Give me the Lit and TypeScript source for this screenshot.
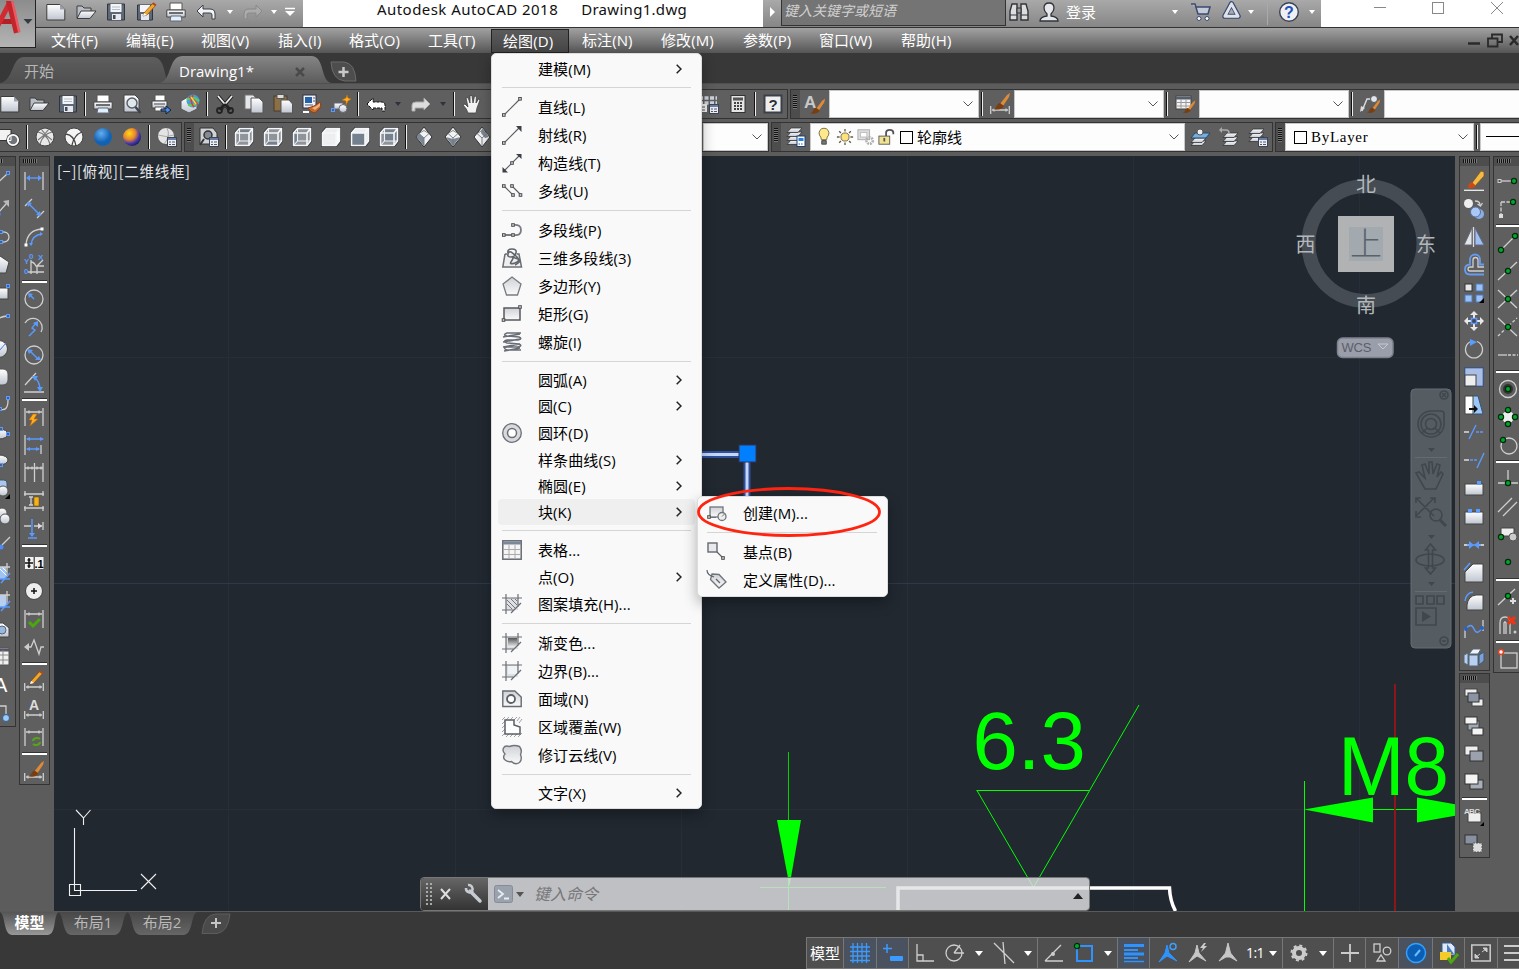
import { LitElement, html, svg, css } from "lit";
import { customElement } from "lit/decorators.js";

const dimBase = svg`<path class="l" d="M1 1v18M19 1v18M2 5h16M5 3.500v3M15 3.500v3"/>`;
const dimLow = svg`<path class="l" d="M.7 12v8M19.3 12v8M2 16h16M4 14.500v3M16 14.500v3"/>`;
const brush = svg`<path d="M9 13l7-9 3-2-1 4-6 9z" fill="#e08a35"/><path d="M2 18c4 0 3-5 7-6l4 3c-2 4-7 4-11 3z" fill="#7a3d10"/>`;
const pencil = svg`<path d="M6 11L15 1l3 2-9 10-4 1z" fill="#f2a72c" stroke="#6b3a10" stroke-width=".6"/><path d="M5 14l1-3 3 2z" fill="#fff"/><path d="M14 2l1.500-1.500 3 2L17 4z" fill="#b5461c"/>`;
const gdot = (x: number, y: number) => svg`<circle cx=${x} cy=${y} r="2.600" fill="#00a52c" stroke="#06280d" stroke-width="1.200"/>`;
const bsq = (x: number, y: number) => svg`<rect x=${x - 1.5} y=${y - 1.5} width="3" height="3" fill="#4c5f80" stroke="#5b9bff"/>`;
const msq = (x: number, y: number) => svg`<rect x=${x - 1.3} y=${y - 1.3} width="2.600" height="2.600" fill="#ddd" stroke="#4b4d52"/>`;
const panelMini = svg`<rect x="10.500" y="10.500" width="9" height="9" fill="#e9eef7" stroke="#3d4552"/><path d="M11 12h8" stroke="#667ea4" stroke-width="2"/><path d="M12 15h2m1 0h3M12 17.500h2m1 0h3" stroke="#556"/>`;
const sheet = (x: number, y: number, f = "url(#w)") => svg`<path d="M${x + 4} ${y}h11l-4 4.500h-11z" fill=${f} stroke="#333" stroke-width=".8"/>`;
const FACES = ["M5.500 1.500h13L15 6H1.500z", "M5.500 14h13L15 18.500H1.500z", "M1.500 6l4-4.500V14l-4 4.500z", "M15 6l3.500-4.500V14L15 18.500z", "M1.500 6H15v12.500H1.500z", "M5.500 1.500h13V14h-13z"];
const cube = (f: number) => svg`<path d="M5.500 1.500h13V14L15 18.500H1.500V6z" fill="#858a91" stroke="#2f3338" stroke-width="3"/>
  <path d="M5.500 1.500h13V14L15 18.500H1.500V6z" fill=${f === 4 || f === 3 ? "#eceef0" : "#8f949b"}/>
  <path d=${FACES[f]} fill=${f === 3 ? "#fff" : "#74808e"}/>
  <path d="M5.500 1.500h13V14L15 18.500H1.500V6zM1.500 6H15v12.500M15 6l3.500-4.500" fill="none" stroke="#f6f7f8" stroke-width="1.600"/>
  ${f === 4 ? "" : svg`<path d="M5.500 2v12H18M5.500 14l-4 4.500" fill="none" stroke="#f0f1f3" stroke-width="1.100"/>`}`;
const dia = (f: number) => svg`<path d="M10 0l8 10-8 10-8-10z" fill="#f0f2f5" stroke="#333"/><path d=${["M2.500 10L10 19v-8L5 6.500z", "M10 12l7-2-7 9-7-9z", "M10 1l7 9-4 1-4-5z", "M10 1l-8 9 4 3 4-5z"][f]} fill="#7b8694"/><path d="M5 6.500l5 4.500 5-4.500M10 11v8M5 6.500l5-3 5 3" fill="none" stroke="#777" stroke-width=".9"/>`;
const hatchFrame = (f: any) => svg`<rect x="4" y="4" width="12" height="12" fill="#dcdfe3"/>${f}<path d="M4 0v20M16 0v13M0 4h20M0 16h12M19 9L9 19" fill="none" stroke="#6a6e75" stroke-width="1.200"/>`;

const I: Record<string, any> = {
  new: svg`<path d="M.8 2.500h13l5 5V18H.8z" fill="url(#w)" stroke="#3c3c3c"/><path d="M14 2.500l5 5h-5z" fill="#9ba2ad"/>`,
  open: svg`<path d="M1 16V4h5l2 2h7v3" fill="#b8bec8" stroke="#3c3c3c"/><path d="M1 16.500L5 9h15l-6 7.500z" fill="url(#w)" stroke="#3c3c3c"/>`,
  save: svg`<path d="M1.500 2h17v16h-17z" fill="#5f6875" stroke="#2f3540"/><rect x="4.500" y="2" width="11" height="8" fill="#f3f5f8"/><path d="M6 5h8M6 7.500h8" stroke="#b7bdc8"/><rect x="6" y="12" width="9" height="6" fill="#e5e8ee"/><rect x="7" y="13" width="2.500" height="4" fill="#444c58"/>`,
  saveas: svg`<path d="M1.500 3h15v15h-15z" fill="#5f6875" stroke="#2f3540"/><rect x="4" y="3" width="10" height="7" fill="#f3f5f8"/><rect x="5" y="12" width="8" height="6" fill="#e5e8ee"/><g transform="translate(2)">${pencil}</g>`,
  print: svg`<path d="M4 1h12v7H4z" fill="#fff" stroke="#555"/><path d="M.8 8h18.400v7H.8z" fill="url(#w)" stroke="#444"/><path d="M3 11h14" stroke="#444" stroke-width="1.500"/><path d="M5 14h10l1 5H4z" fill="#dff1fc" stroke="#667"/>`,
  preview: svg`<path d="M2 1h11l4 4v13H2z" fill="url(#w)" stroke="#444"/><circle cx="10" cy="9" r="5" fill="#dfe7ec" stroke="#555c66" stroke-width="1.400"/><path d="M13.500 13l5 6" stroke="#3c434d" stroke-width="2.500"/>`,
  publish: svg`<path d="M4 1h10v6H4z" fill="#fff" stroke="#555"/><path d="M1 7h15v7H1z" fill="url(#w)" stroke="#444"/><path d="M3 10h11" stroke="#444"/><path d="M4 13h9v4H4z" fill="#fff" stroke="#555"/><path d="M10 15h5v-3l5 4-5 4v-3h-5z" fill="#4c86e8" stroke="#123"/>`,
  dwf: svg`<path d="M1 7l7-4 9 3v9l-8 4-8-4z" fill="url(#w)" stroke="#555"/><circle cx="13" cy="7" r="6.500" fill="#3f9fe0"/><path d="M7 6q6-5 12 1M8 11q6 1 10-2" fill="none" stroke="#5fd04a" stroke-width="2"/><path d="M13 1q-4 6 1 12M9 3q5 2 9 8" fill="none" stroke="#e33b2a" stroke-width="1.500"/><path d="M11 3l5 7" stroke="#ffd23c" stroke-width="1.500"/>`,
  cut: svg`<path d="M3 2l11 13M17 2L6 15" stroke="#222" stroke-width="3.500"/><path d="M3 2l11 13M17 2L6 15" stroke="#eee" stroke-width="1.800"/><path d="M10 10l5 6M10 10l-5 6" stroke="#222" stroke-width="2.500"/><circle cx="4.500" cy="16.500" r="2.500" fill="none" stroke="#222" stroke-width="1.800"/><circle cx="15.500" cy="16.500" r="2.500" fill="none" stroke="#222" stroke-width="1.800"/>`,
  copy: svg`<path d="M1 1h8l3 3v11H1z" fill="#e5e7ea" stroke="#777"/><path d="M7 4h8l4 4v11H7z" fill="url(#w)" stroke="#555"/>`,
  paste: svg`<rect x="1" y="2" width="13" height="15" fill="#8b6f47" stroke="#4b3c26"/><rect x="4" y=".5" width="7" height="4" fill="#ddd" stroke="#555"/><path d="M8 6h8l3.500 4v9H8z" fill="url(#w)" stroke="#555"/>`,
  match: svg`<rect x="1" y="1" width="13" height="13" fill="#eef3fa" stroke="#334"/><rect x="3" y="3" width="7" height="6" fill="#2562a8"/><path d="M11 4h2m-2 3h2M3 11h8" stroke="#557"/><path d="M6 14q6-1 12-6l1 5-6 6q-4 0-7-5z" fill="#c8682a" stroke="#8a4218"/><path d="M10 14q4-1 8-5l0 3-5 4z" fill="#f0b080"/><path d="M1 17h6v2H1z" fill="#fff"/>`,
  block: svg`<rect x="3" y="9" width="9" height="6" fill="url(#w)" stroke="#667"/><circle cx="12" cy="14.500" r="4" fill="url(#w)" stroke="#667"/>${bsq(2, 16)}<path d="M16 1l1 3 3 1-3 2-2 4v-4l-4-1 4-2z" fill="#ffb41c" stroke="#c86b08" stroke-width=".7"/>`,
  undo: svg`<path d="M1 9l6-6v4h7q5 0 5 5v5h-3v-4q0-2-2-2H7v4z" fill="#f0f2f5" stroke="#3a3e45"/>`,
  redoOff: svg`<path d="M19 9l-6-6v4H6q-5 0-5 5v5h3v-4q0-2 2-2h7v4z" fill="#ababab" stroke="#888"/>`,
  undo2: svg`<path d="M1 10l6-6v4h8q4 0 4 3v6h-3v-3H7v2z" fill="#fff" stroke="#111" stroke-dasharray="3 1"/>`,
  redo2: svg`<path d="M19 10l-6-6v4H5q-4 0-4 3v6h3v-3h9v2z" fill="#ddd" stroke="#aaa"/>`,
  hand: svg`<path d="M6 19q-1-4-5-8l2-1 3 3L4 4l2-.5L8 9V1.500h2L11 9l1.500-7 2 .5L14 9l2.500-4 1.500 1-3 8-1 5z" fill="#f2f2f2" stroke="#3f3f3f" stroke-width=".8"/>`,
  tools: svg`<path d="M0 4h18M0 9h18" fill="none" stroke="#cdd3dc" stroke-width="3.500" stroke-dasharray="4 1.500"/><path d="M1 10h7v8H1z" fill="#eee"/><path d="M2 13h4M2 16h4" stroke="#555"/>${panelMini}`,
  calc: svg`<rect x="3" y="1.500" width="14" height="17" fill="#e5e5e5" stroke="#333"/><rect x="5" y="3.500" width="10" height="3" fill="#555"/><path d="M6 9h8M6 12h8M6 15h8" stroke="#444" stroke-width="2" stroke-dasharray="2 1"/>`,
  help: svg`<rect x="1.500" y="1.500" width="17" height="17" fill="#eee" stroke="#3b4048" stroke-width="2"/><text x="10" y="16" text-anchor="middle" font-size="15" font-weight="700" fill="#2c3038">?</text>`,
  abrush: svg`<text x="-1" y="14" font-size="17" font-weight="700" fill="#c9c9c9">A</text><g transform="translate(3 3) scale(.9)">${brush}</g>`,
  dimbrush: svg`${dimLow}<g transform="translate(1 -3)">${brush}</g>`,
  tablebrush: svg`<rect x="1" y="2" width="15" height="13" fill="#f2f2f2" stroke="#444"/><path d="M1 4h15" stroke="#555e6b" stroke-width="3"/><path d="M1 8.500h15M1 12h15M6 5v10M11 5v10" stroke="#999"/><g transform="translate(6 5) scale(.75)">${brush}</g>`,
  leaderbrush: svg`<path d="M2 17L7 5h5" fill="none" stroke="#ddd" stroke-width="1.400"/><path d="M0 18l1-6 4 2z" fill="#ddd"/><circle cx="14" cy="5" r="3.500" fill="#dfe6ee" stroke="#555"/><g transform="translate(5 4) scale(.8)">${brush}</g>`,
  wire2: svg`<rect x="-1" y="2.500" width="12" height="11" fill="#f2f2f2" stroke="#333"/><circle cx="13" cy="13" r="6.800" fill="#333"/><circle cx="13" cy="13" r="5.200" fill="#70757c" stroke="#fff" stroke-width="1.800"/><path d="M7 13.500h4V8" stroke="#fff" fill="none"/>`,
  sph1: svg`<circle cx="10" cy="10" r="9" fill="#e8e8e8" stroke="#444"/><path d="M3 5q9 2 12 12M17 5Q8 7 5 17M6 2q5 7 11 11M14 2Q9 9 3 13" fill="none" stroke="#777" stroke-width="1.200"/>`,
  sph2: svg`<circle cx="10" cy="10" r="9" fill="#f4f4f4" stroke="#444"/><path d="M2 7q8 1 10 12M18 5Q10 8 8 18" fill="none" stroke="#444" stroke-width="1.300"/>`,
  sph3: svg`<circle cx="10" cy="10" r="9" fill="url(#blueball)"/>`,
  sph4: svg`<circle cx="10" cy="10" r="9" fill="url(#goldball)"/>`,
  sphPanel: svg`<circle cx="9" cy="9" r="8.500" fill="#e4e4e4" stroke="#555"/><path d="M10 1q4 8-3 16M1 8q8 3 16 0" fill="none" stroke="#aaa"/>${panelMini}`,
  viewPanel: svg`<path d="M1 1h13l4 5v11H1z" fill="#cfd3d8" stroke="#333"/><circle cx="9" cy="8" r="4" fill="#848b94" stroke="#333" stroke-width="1.500"/><path d="M5 12l-4 6" stroke="#333" stroke-width="2"/>${panelMini}`,
  c0: cube(0), c1: cube(1), c2: cube(2), c3: cube(3), c4: cube(4), c5: cube(5),
  d0: dia(0), d1: dia(1), d2: dia(2), d3: dia(3),
  layers: svg`${sheet(1, 13)}${sheet(1, 9)}${sheet(1, 5)}${sheet(1, 1)}<rect x="11" y="9" width="8" height="10.500" fill="#fff" stroke="#1a4078"/><rect x="12.500" y="11" width="5" height="3" fill="#2b7fe0"/><path d="M12.500 17h5" stroke="#2b5aa0" stroke-dasharray="1.500 1"/>`,
  lay1: svg`${sheet(1, 14)}${sheet(1, 11)}<path d="M5 6h15l-4 5H1z" fill="#78aede" stroke="#27486b"/><circle cx="10" cy="5" r="3" fill="#eee" stroke="#555"/>`,
  lay2: svg`${sheet(4, 14)}${sheet(4, 10)}${sheet(4, 6)}<path d="M1 3h6q3 0 3 3" fill="none" stroke="#aaa" stroke-width="1.500"/><path d="M3 0v6L0 3z" fill="#aaa"/>`,
  lay3: svg`${sheet(1, 10)}${sheet(1, 6)}${sheet(1, 2)}${panelMini}`,
  bulb: svg`<path d="M7 13q0-3-2-5a5.500 5.500 0 1 1 10 0q-2 2-2 5z" fill="#ffe98a" stroke="#6d6540"/><path d="M7.500 14h5v4h-5z" fill="#777" stroke="#444"/>`,
  sun: svg`<circle cx="10" cy="10" r="4.500" fill="#ffe27a" stroke="#665"/><path d="M10 1v3m0 12v3M1 10h3m12 0h3M3.500 3.500l2 2m9 9l2 2m0-13l-2 2m-9 9l-2 2" stroke="#665c40" stroke-width="1.500"/>`,
  vpfrz: svg`<rect x="1" y="2" width="13" height="11" fill="#ddd" stroke="#aaa"/><rect x="4" y="5" width="7" height="5" fill="#fff" stroke="#bbb"/><circle cx="14" cy="14" r="3.500" fill="none" stroke="#b0b0b0" stroke-width="3" stroke-dasharray="2 1"/>`,
  lock: svg`<path d="M9 9V5q0-3 4-3t4 3v2" fill="none" stroke="#555" stroke-width="2"/><rect x="1" y="9" width="12" height="9" fill="#f2e391" stroke="#555"/><path d="M7 11v4" stroke="#555" stroke-width="2"/>`,
  // drawing tools
  tline: svg`<path class="l" d="M1 18L17 3"/>${bsq(18, 2)}`,
  tray: svg`<path class="l" d="M8 14l8-9"/><path d="M19 1v7l-6-6z" fill="#bbb"/><circle cx="9" cy="15" r="2" fill="#3f7ff0"/>`,
  tpline: svg`<path class="l" d="M10 5q9-1 9 5t-9 5" stroke-width="2"/>${bsq(11, 5)}${bsq(11, 15)}`,
  tpoly: svg`<path d="M10 1l9 6-3 11H4L1 7z" fill="url(#w)" stroke="#444"/>`,
  trect: svg`<rect x="1" y="5" width="17" height="11" fill="url(#w)" stroke="#444"/>${bsq(18, 3)}`,
  tarc: svg`<path class="l" d="M2 17Q5 6 17 5"/>${bsq(18, 5)}`,
  tcirc: svg`<circle cx="9" cy="10" r="8.500" fill="url(#w)" stroke="#444"/><path d="M9 12l7-8" stroke="#3f7ff0"/>`,
  tcloud: svg`<rect x="2" y="2" width="16" height="16" rx="5" fill="url(#w)" stroke="#555"/>`,
  tspl: svg`<path class="l" d="M10 14q8 3 8-9" stroke-width="2"/>${bsq(18, 3)}${bsq(10, 14)}`,
  tell: svg`<ellipse cx="9" cy="11" rx="9" ry="5" fill="url(#w)" stroke="#444"/>${bsq(11, 6)}${bsq(18, 11)}`,
  tell2: svg`<ellipse cx="9" cy="9" rx="9" ry="5" fill="url(#w)" stroke="#444"/>${bsq(11, 14)}`,
  tins: svg`<rect x="3" y="1" width="14" height="12" rx="3" fill="#a8c8ee" stroke="#456"/><circle cx="13" cy="12" r="5" fill="url(#w)" stroke="#555"/><path d="M20 15v5h-5z"/>`,
  tblk: svg`<circle cx="12" cy="6" r="5" fill="url(#w)" stroke="#555"/><circle cx="15" cy="12" r="5" fill="url(#w)" stroke="#555"/>`,
  tpt: svg`<path class="l" d="M12 10l8-8" stroke-width="2"/><circle cx="11" cy="12" r="2.500" fill="#4b8bf5"/>`,
  that: svg`<path d="M0 4h16v12H0z" fill="#9fc3f3"/><path d="M8 4l9 9M12 4l5 5" stroke="#fff"/><path class="l" d="M17 0v14M8 4h12"/><path class="b" d="M20 10l-9 10M9 16h11"/>`,
  tgra: svg`<path d="M0 4h16v12H0z" fill="#b8ceef"/><path class="l" d="M17 0v14M8 4h12"/><path class="b" d="M20 10l-9 10M9 16h11"/>`,
  treg: svg`<path d="M1 4h12l6 5v9H1z" fill="url(#w)" stroke="#444"/><circle cx="12" cy="11" r="4" fill="#9ab8dd" stroke="#567"/>`,
  ttab: svg`<rect x="1" y="1" width="18" height="17" fill="#f0f0f0" stroke="#555"/><path d="M1 3h18" stroke="#556" stroke-width="3"/><path d="M1 8h18M1 13h18M7 3v15M13 3v15" stroke="#888"/>`,
  ttxt: svg`<text x="4" y="17" font-size="20" fill="#fff">A</text>`,
  tadd: svg`<path class="l" d="M8 3h8v8"/><circle cx="16" cy="15" r="3.500" fill="#9cc9f5" stroke="#2e5f96"/>`,
  // dimension tools
  m1: svg`<path class="l" d="M1 1v18M19 1v18"/><path class="b" d="M3 7h14"/><path class="bf" d="M2 7l4-3v6zM18 7l-4-3v6z"/>`,
  m2: svg`<path class="l" d="M1 7l7-7M13 19l7-7"/><path class="b" d="M4 4l12 12"/><path class="bf" d="M3 3l5 1-4 4zM17 17l-5-1 4-4z"/>`,
  m3: svg`<path class="l" d="M2 18Q3 3 18 2" stroke-width="2"/><path class="b" d="M7 18Q8 8 18 7"/><rect x=".5" y="16.500" width="3" height="3" fill="#fff"/><rect x="16.500" y=".5" width="3" height="3" fill="#fff"/><path class="bf" d="M5 16h4l-2 3zM16 5v4l3-2z"/>`,
  m4: svg`<path class="l" d="M7 5v14M4 17h16M7 7q3 0 5 4h8M13 11v8M19 5l-6 6"/><g fill="#5b9bff" font-size="8" font-weight="700"><text x="0" y="9">Y</text><text x="5" y="4">0</text><text x="14" y="5">X</text><text x="0" y="19">0</text></g>`,
  m5: svg`<circle class="l" cx="10" cy="10" r="9" stroke-width="2"/><path class="b" d="M10 10L6 6"/><path class="bf" d="M4 4l5 1-4 4z"/>`,
  m6: svg`<path class="l" d="M1 6A9 9 0 1 1 17 15" stroke-width="2"/><path class="b" d="M5 19l6-6-3-2 4-5"/><path class="bf" d="M14 4v6l-5-4z"/>`,
  m7: svg`<circle class="l" cx="10" cy="10" r="9" stroke-width="2"/><path class="b" d="M6 6l8 8"/><path class="bf" d="M3 4l6 1-4 4zM17 15l-6 0 4-4z"/>`,
  m8: svg`<path class="l" d="M1 12L12 0M0 19h20" stroke-width="1.800"/><path class="b" d="M11 5q5 4 5 12"/><path class="bf" d="M8 3l6 0-3 5zM13 14h6l-3 5z"/>`,
  m9: svg`${dimBase}<path d="M9 7l-4 6h3l-2 6 8-7h-4l3-5z" fill="#ffb01e" stroke="#c4680a" stroke-width=".7"/>`,
  m10: svg`<path class="l" d="M1 0v20M17 10v9"/><path class="b" d="M3 4h16M3 14h12"/><path class="bf" d="M2 4l4-2v4zM20 4l-4-2v4zM2 14l4-2v4zM16 14l-4-2v4z"/>`,
  m11: svg`<path class="l" d="M1 0v19M10.500 0v19M19 0v19M1 5h18M4 3.500v3M8 3.500v3M13 3.500v3M17 3.500v3"/>`,
  m12: svg`<path class="l" d="M0 3h20M1 0v5M19 0v5M0 17h20M1 15v5M19 15v5M7 6v8M5 6h4M5 14h4"/><rect x="10" y="6" width="5" height="9" fill="#f5b21d" stroke="#7a5000" stroke-width=".6"/>`,
  m13: svg`<path class="l" d="M0 7h7M10 7h8M19 3v8"/><path d="M14 4l4 3-4 3z" fill="#ddd"/><path class="b" d="M8 0v17M4 19h9"/><path class="bf" d="M5 14h6l-3 4z"/>`,
  m14: svg`<path d="M1 4h8.500v12H1zM11 4h8.500v12H11z" fill="#f2f2f2"/><path d="M5 5v10M1 10h8M3.500 7h3M3.500 13h3" stroke="#111" stroke-width="1.500"/><text x="10.500" y="15" font-size="11" font-weight="700">.1</text>`,
  m15: svg`<circle cx="10" cy="10" r="8.500" fill="#eee" stroke="#444"/><path d="M10 7v6M7 10h6" stroke="#111" stroke-width="1.500"/>`,
  m16: svg`${dimBase}<path d="M5 13l4 4 7-7" fill="none" stroke="#48a80c" stroke-width="3"/>`,
  m17: svg`<path class="l" d="M3 10h4l3-7 5 14 2-7h3" stroke-width="1.500"/><path d="M0 10l5-4v8z" fill="#ccc"/>`,
  m18: svg`${dimLow}<g transform="translate(1 -1)">${pencil}</g>`,
  m19: svg`${dimLow}<text x="5" y="11" font-size="14" font-weight="700" fill="#ddd">A</text>`,
  m20: svg`${dimBase}<path d="M9 14a4 3 0 0 1 7-2M16 15a4 3 0 0 1-7 2" fill="none" stroke="#54a818" stroke-width="2"/>`,
  m21: svg`${dimLow}<g transform="translate(2 -2) scale(.95)">${brush}</g>`,
  // modify tools
  e1: svg`<path d="M8 12l9-12 3 1v4l-9 10z" fill="#f5ba43" stroke="#7c4b0a" stroke-width=".6"/><path d="M4 17q0-5 4-6l4 4q-3 3-8 2z" fill="#c84a18"/><path d="M0 19.300h20" stroke="#eee" stroke-width="1.300"/>`,
  e2: svg`<circle cx="4.500" cy="4.500" r="4.500" fill="#eee"/><circle cx="15" cy="15" r="5" fill="#89aee8"/><circle cx="11.500" cy="13" r="5" fill="#a9c8f5" stroke="#55709a"/><path class="l" d="M11 2q5 0 5 4M13.500 5l3 2 2-3"/>`,
  e3: svg`<path d="M8 1v17H0z" fill="#e1e5ea" stroke="#667"/><path d="M11 1v17h9z" fill="#9dc1f2" stroke="#668"/><path d="M9.500 0v20" stroke="#ddd" stroke-width="1.300"/>`,
  e4: svg`<path d="M20 9h-4V4a5 5 0 0 0-10 0v5q-5 0-5 5t5 5h14" transform="translate(0 .5)" fill="none" stroke="#659cf2" stroke-width="1.800"/><path class="l" d="M20 12h-6V5a2.500 2.500 0 0 0-5 0v7H6a2 2 0 0 0 0 4h14"/>`,
  e5: svg`<rect x="1" y="1" width="7" height="7" fill="#e8e8e8" stroke="#333"/><g fill="#9ac0f5" stroke="#4d7bbd"><rect x="12" y="1" width="7" height="7"/><rect x="1" y="12" width="7" height="7"/><rect x="12" y="12" width="7" height="7"/></g><path d="M20 15v5h-5z"/>`,
  e6: svg`<path d="M10 0l4 4h-3v12h3l-4 4-4-4h3V4H6zM0 10l4-4v3h12V6l4 4-4 4v-3H4v3z" fill="#e8e8e8"/><rect x="7.500" y="7.500" width="5" height="5" fill="#444" stroke="#5b9bff" stroke-width="1.500"/>`,
  e7: svg`<path class="l" d="M13 2.500a8.500 8.500 0 1 1-6 0" stroke-width="2"/><path d="M6 0l7 3-7 4z" fill="#5b9bff"/>`,
  e8: svg`<rect x=".8" y=".8" width="18.400" height="18.400" fill="#a9bfe8" stroke="#2d4a7c"/><rect x="1" y="8" width="11" height="11" fill="#eee" stroke="#444"/>`,
  e9: svg`<path d="M8 1h6l5 18H8z" fill="#9cc6f5" stroke="#33557c"/><path d="M1 1h8v18H1z" fill="#fff" stroke="#444"/><path d="M5 13h5v-3l4 4-4 4v-3H5z" fill="#111"/>`,
  e10: svg`<path d="M0 9h5" stroke="#ddd" stroke-width="1.500"/><path d="M12 9h8" stroke="#5b9bff" stroke-width="1.500" stroke-dasharray="3 1"/><path class="b" d="M5 16L12 2"/>`,
  e11: svg`<path d="M0 9h5" stroke="#ddd" stroke-width="1.500"/><path d="M6 9h7" stroke="#5b9bff" stroke-width="1.500" stroke-dasharray="3 1"/><path class="b" d="M13 17L20 2"/>`,
  e12: svg`<rect x="1" y="5" width="18" height="11" fill="url(#w)" stroke="#444"/><rect x="13" y="2" width="4" height="4" fill="#5b9bff"/>`,
  e13: svg`<rect x="1" y="5" width="18" height="12" fill="url(#w)" stroke="#444"/><path d="M4 2h4v4H4zM12 2h4v4h-4z" fill="#5b9bff"/>`,
  e14: svg`<path d="M0 10h5M15 10h5" stroke="#eee" stroke-width="1.500"/><path class="bf" d="M5 6l5 4-5 4zM15 6l-5 4 5 4z"/><path class="b" d="M3 10h14"/>`,
  e15: svg`<path d="M1 19V9l8-8h10v18z" fill="url(#w)" stroke="#444"/><path class="b" d="M0 7l6-7" stroke-width="2"/>`,
  e16: svg`<path d="M3 19v-5q1-9 9-10h7v15z" fill="url(#w)" stroke="#444"/><path class="b" d="M1 10Q2 2 9 1" stroke-width="2"/>`,
  e17: svg`<path class="l" d="M1 19V9M19 12V1"/><path class="b" d="M2 10q5-7 8 0t8-1" stroke-width="2"/><circle cx="2" cy="10" r="2" fill="#2462c8"/><circle cx="18" cy="9" r="2" fill="#2462c8"/>`,
  e18: svg`<path d="M0 8l4-2v12l-4-2zM5 8h9v11H5z" fill="#b9d0f0" stroke="#567"/><path d="M5 7l4-5h8l-3 5z" fill="#eef4fc" stroke="#567"/><path d="M15 8l5-3v9l-5 4z" fill="#7ba2d8" stroke="#456"/>`,
  o1: svg`<rect x="1" y="1" width="12" height="7" fill="#eee" stroke="#444"/><rect x="8" y="11" width="11" height="7" fill="#eee" stroke="#444"/><rect x="4" y="5" width="11" height="9" fill="#8b93a2" stroke="#333"/>`,
  o2: svg`<rect x="4" y="5" width="11" height="9" fill="#a0a8b5" stroke="#444"/><rect x="1" y="1" width="12" height="7" fill="#f4f4f4" stroke="#333"/><rect x="8" y="12" width="11" height="7" fill="#f4f4f4" stroke="#333"/>`,
  o3: svg`<rect x="1" y="2" width="13" height="9" fill="#eee" stroke="#444"/><rect x="6" y="7" width="13" height="10" fill="#9ba2ae" stroke="#333"/>`,
  o4: svg`<rect x="6" y="8" width="13" height="9" fill="#a8aeb8" stroke="#333"/><rect x="1" y="2" width="13" height="10" fill="#f4f4f4" stroke="#333"/>`,
  o5: svg`<rect x="4" y="7" width="13" height="9" fill="#eee" stroke="#444"/><text x="0" y="8" font-size="8" font-weight="700" fill="#ddd" textLength="16">ABC</text><path d="M20 16v4h-4z"/>`,
  o6: svg`<rect x="1" y="1" width="12" height="9" fill="#8791a0" stroke="#333"/><rect x="9" y="9" width="9" height="9" fill="#ddd" stroke="#555" stroke-dasharray="2 1"/>`,
  // snap tools
  s1: svg`<path class="l" d="M1 10h15"/><rect x="0" y="8.500" width="3" height="3" fill="#555" stroke="#ccc"/>${gdot(16, 10)}`,
  s2: svg`<path class="l" d="M3 3h12M3 3v14" stroke-dasharray="4 1.500"/>${gdot(15, 3)}<rect x="1" y="15" width="4" height="4" fill="#ddd"/>`,
  s3: svg`<path class="l" d="M3 17L17 3"/>${gdot(3, 17)}${gdot(17, 3)}`,
  s4: svg`<path class="l" d="M0 19L19 1"/>${gdot(10, 10)}`,
  s5: svg`<path class="l" d="M0 1l19 18M0 19L19 1"/>${gdot(10, 10)}`,
  s6: svg`<path class="l" d="M0 1l19 18"/><path class="l" d="M0 19L19 1" stroke-dasharray="3 2"/>${gdot(10, 10)}`,
  s7: svg`<path class="l" d="M0 10h9"/><path class="l" d="M10 10h10" stroke-dasharray="3 1.500"/>`,
  s8: svg`<circle class="l" cx="10" cy="10" r="8.500" stroke-width="2"/><circle cx="10" cy="10" r="5" fill="#333"/>${gdot(10, 10)}`,
  s9: svg`<circle cx="10" cy="10" r="6" fill="#eee"/>${gdot(10, 3)}${gdot(10, 17)}${gdot(3, 10)}${gdot(17, 10)}`,
  s10: svg`<circle class="l" cx="11" cy="11" r="8" stroke-width="2"/>${gdot(5, 5)}`,
  s11: svg`<path class="l" d="M10 1v13M0 14h20"/>${gdot(10, 14)}`,
  s12: svg`<path class="l" d="M0 15L14 1M5 19L19 5" stroke-width="2"/>`,
  s13: svg`<path d="M3 3h13v5l-3 3H3z" fill="#eee" stroke="#444"/><circle cx="15" cy="12" r="4" fill="#ccc" stroke="#555"/>${gdot(3, 12)}`,
  s14: gdot(10, 9),
  s15: svg`<path class="l" d="M0 18L17 2"/>${gdot(10, 9)}<path d="M15 11v6M12 14h6" stroke="#ddd" stroke-width="2"/>`,
  s16: svg`<path class="l" d="M2 19V8q0-6 5-6t5 6v11M6 19V8q1-2 2 0v11"/><path d="M10 2l7 7M17 2l-7 7" stroke="#f23412" stroke-width="3"/><circle cx="17" cy="17" r="1.500" fill="#ccc"/>`,
  s17: svg`<rect class="l" x="3" y="4" width="16" height="15" stroke-width="1.800"/><circle cx="3" cy="3" r="2.500" fill="#fff" stroke="#e8401c" stroke-width="1.500"/>`,
  // menu glyphs
  gLine: svg`<path class="k" d="M2 18L18 2"/>${msq(1.8, 18)}${msq(18, 1.8)}`,
  gRay: svg`<path class="k" d="M2 18L17 3"/>${msq(1.8, 18)}<path d="M14 1h5.500v6z" fill="#3c3f45"/>`,
  gX: svg`<path class="k" d="M2 18L18 2"/>${msq(10, 10)}<path d="M14 1h5.500v5zM.5 14v5.500H6z" fill="#3c3f45"/>`,
  gMl: svg`<path class="k" d="M2 5l9 9M10 5l9 9"/>${msq(1.800, 5)}${msq(10, 5)}${msq(11, 14)}${msq(18.500, 14)}`,
  gPl: svg`<path d="M11 5q8-1 8 5t-7 5H2" fill="none" stroke="#777b82" stroke-width="1.800"/>${msq(11, 5)}${msq(1.800, 15)}${msq(11, 15)}`,
  g3p: svg`<path d="M3 6H5M15 6h2l2.500 13H.8L3 6" fill="#eee" stroke="#6b6f76" stroke-width="1.500"/><path d="M6 5q-1-4 4-4t4 4-5 4-3-3 3-2 6 5-2 6-4-1 2-4 5 1-3 6" fill="none" stroke="#60646b" stroke-width="1.600"/>`,
  gPoly: svg`<path d="M10 1l9 7-3.500 11h-11L1 8z" fill="url(#mg)" stroke="#787b82" stroke-width="1.300"/>`,
  gRect: svg`<rect x="2" y="4" width="16" height="12" fill="url(#mg)" stroke="#55585e" stroke-width="1.500"/>${msq(1.500, 16)}${msq(18, 3)}`,
  gHelix: svg`<path d="M19 1H5q-5 2 0 3l12 1q4 2-1 3H5q-5 1 0 3l12 1q4 2-1 3H5q-5 1 0 3h14M1 5l17-3M1 10l17-3M1 15l17-3M2 19l16-3" fill="none" stroke="#696d75" stroke-width="1.500"/>`,
  gDonut: svg`<circle cx="10" cy="10" r="7" fill="none" stroke="#d7d9dd" stroke-width="5"/><circle cx="10" cy="10" r="9.300" fill="none" stroke="#6b6e75" stroke-width="1.300"/><circle cx="10" cy="10" r="4.500" fill="#fff" stroke="#6b6e75" stroke-width="1.500"/>`,
  gTab: svg`<rect x=".8" y=".8" width="18.400" height="18.400" fill="#f5f5f5" stroke="#666a71" stroke-width="1.500"/><path d="M1 3h18" stroke="#7b8698" stroke-width="3"/><path d="M1 9.500h18M1 14.500h18M7 5v14M13 5v14" stroke="#aaa"/>`,
  gHatch: hatchFrame(svg`<path d="M5 6l9 9M5 10l5 5M9 5l6 6M13 5l2 2" stroke="#777"/>`),
  gGrad: hatchFrame(svg`<rect x="6" y="5" width="9" height="9" fill="url(#dg)"/>`),
  gBound: hatchFrame(svg`<rect x="6" y="5" width="9" height="8" fill="#f1f2f4"/>`),
  gRegion: svg`<path d="M.8 2h12l6.400 6v9.500H.8z" fill="url(#mg)" stroke="#666a71" stroke-width="1.400"/><circle cx="9" cy="10" r="4" fill="#fff" stroke="#5b5f66" stroke-width="1.800"/>`,
  gWipe: svg`<path d="M0 3l3-3M0 7l3-3M4 3l3-3M8 3l3-3M12 3l3-3M15 4l3-4M17 6l3-4M0 11l3-3M0 15l3-3M0 19l3-3M4 20l3-3M8 20l3-3M12 20l3-3M16 20l4-4" stroke="#999" stroke-width=".9"/><path d="M3 3h9v5l6 2v7H3z" fill="#fff" stroke="#5b5f66" stroke-width="1.500"/>`,
  gCloud: svg`<path d="M3 9q-3-3-1.500-6t6-1.500q5-2 10 0 3 4 1 8 2 5-1 8-4 3-8-1-4 1-7-2-2-3 .5-5.500z" fill="url(#mg)" stroke="#70747b" stroke-width="1.400"/>`,
  gMake: svg`<rect x="3" y="4" width="13" height="10" fill="url(#mg)" stroke="#70747b" stroke-width="1.300"/><circle cx="15" cy="13.500" r="4" fill="#eee" stroke="#70747b" stroke-width="1.300"/><path d="M15 13.500l3-3M1 14.500h8" stroke="#70747b"/>${msq(2, 14)}`,
  gBase: svg`<rect x="1" y="1" width="9" height="9" fill="#e8e9ec" stroke="#666a71" stroke-width="1.400"/><path class="k" d="M10 10l6 6"/>${msq(16, 16)}`,
  gAttr: svg`<path d="M5 4l7 .5 7 7.500-7 6-8.500-8.500z" fill="url(#mg)" stroke="#6f737a" stroke-width="1.300"/><path d="M0 0q0 5 7 7M9 9l4 4" fill="none" stroke="#5f636a" stroke-width="1.200"/>`,
  // title bar
  bino: svg`<path d="M3 2h5v16H1V9zM12 2h5l2 7v9h-7z" fill="#ddd" stroke="#30343a" stroke-width="1.400"/><path d="M8 6h4v5H8zM1 13h7M12 13h7" fill="#999" stroke="#30343a"/>`,
  user: svg`<path d="M1 19q0-4 7-5v-2q-3-3-3-6 0-5 5-5t5 5q0 3-3 6v2q7 1 7 5z" fill="#e6e8eb" stroke="#30343a" stroke-width="1.300"/>`,
  cart: svg`<path d="M0 2h4l3 10h10l2-7H5" fill="#c5cbd6" stroke="#3a4a72" stroke-width="1.500"/><circle cx="8" cy="16.500" r="2" fill="#fff" stroke="#3a4a72"/><circle cx="16" cy="16.500" r="2" fill="#fff" stroke="#3a4a72"/>`,
  a360: svg`<path d="M10 3l7 13H3z" fill="none" stroke="#3a4a72" stroke-width="5.500" stroke-linejoin="round"/><path d="M10 3l7 13H3z" fill="#3a4a72" stroke="#dfe3ea" stroke-width="3" stroke-linejoin="round"/><path d="M10 8l3 5.500H7z" fill="#aaa"/>`,
  qhelp: svg`<circle cx="10" cy="10" r="9.300" fill="#eef0f4" stroke="#3b4252" stroke-width="1.400"/><text x="10" y="16" text-anchor="middle" font-size="16" font-weight="700" fill="#1d52b8">?</text>`,
  // status bar
  bGrid: svg`<path d="M3 0v20M7.500 0v20M12 0v20M16.500 0v20M0 4h20M0 8.500h20M0 13h20M0 17.500h20" stroke="#3c9bff" stroke-width="1.300"/>`,
  bSnap: svg`<path d="M4 1v9M0 5.500h9" stroke="#3c9bff" stroke-width="1.500"/><rect x="7" y="13" width="13" height="5" rx="1" fill="#3c9bff"/>`,
  bOrtho: svg`<path class="l" d="M2 1v17h17M2 12h6v6" stroke-width="1.500"/>`,
  bPolar: svg`<circle class="l" cx="9" cy="10" r="8" stroke-width="1.600"/><path class="l" d="M9 10h10M9 10l6-8"/>`,
  bIso: svg`<path class="l" d="M0 0l20 20M9 -1l2 22"/>`,
  bTrack: svg`<path class="l" d="M1 18L17 2M1 18h18"/><circle cx="9" cy="11" r="2" fill="#ccc"/>`,
  bOsnap: svg`<rect x="3" y="3" width="15" height="15" fill="none" stroke="#2f93ff" stroke-width="2"/>${gdot(3, 3)}`,
  bLw: svg`<path d="M0 2.500h20M0 11h20" stroke="#2f93ff" stroke-width="3"/><path d="M0 7h14M0 15h14" stroke="#2f93ff" stroke-width="2"/><path d="M0 18.500h20" stroke="#2f93ff" stroke-width="1.500"/>`,
  bAn1: svg`<path d="M9 2l2 8 8 8-8-4-2-1-8 6 6-9z" fill="#2f93ff" stroke="#2f93ff"/><circle cx="15" cy="3.500" r="3" fill="none" stroke="#3ca0ff" stroke-width="1.500"/>`,
  bAn2: svg`<path d="M9 2l2 8 7 8-7-4-2-1-8 6 6-9z" fill="#c6c6c6" stroke="#c6c6c6"/><path d="M16 0l-4 5h3l-2 4 6-6h-3l2-3z" fill="#ccc"/>`,
  bAn3: svg`<path d="M10 0l2.500 10 6.500 8-7-4h-4l-7 4 6.500-8z" fill="#c6c6c6" stroke="#c6c6c6"/>`,
  bGear: svg`<circle cx="10" cy="10" r="5" fill="none" stroke="#ccc" stroke-width="4"/><circle cx="10" cy="10" r="7.500" fill="none" stroke="#ccc" stroke-width="2" stroke-dasharray="3 2.900"/>`,
  bPlus: svg`<path d="M10 1v18M1 10h18" stroke="#ccc" stroke-width="1.800"/>`,
  bUnits: svg`<rect class="l" x="2" y="1" width="6" height="8" stroke-width="1.500"/><circle class="l" cx="15" cy="8" r="3.800" stroke-width="1.500"/><path class="l" d="M5 18l4-6 4 6z" stroke-width="1.500"/>`,
  bPerf: svg`<circle cx="10" cy="10" r="9.500" fill="#0a5fb4" stroke="#35a0ff" stroke-width="1.500"/><path d="M9 13l5-6" stroke="#69bdff" stroke-width="2"/>`,
  bDoc: svg`<path d="M3 0h9l4 4v8H3z" fill="#dfe8f5" stroke="#345f9a"/><path d="M8 1l7 10H8z" fill="#477cc4"/><rect x="1" y="9" width="11" height="8" fill="#f3cb2b"/><path d="M9 15l3 4 7-8" fill="none" stroke="#4da615" stroke-width="3"/>`,
  bFull: svg`<rect x=".8" y="2" width="18.400" height="16" fill="none" stroke="#ccc" stroke-width="1.500"/><path d="M12 5h4v4zM8 15H4v-4zM11 9l4-3M5 14l4-3" fill="#ccc" stroke="#ccc"/>`,
  bMenu: svg`<path d="M1 3h20M1 10h20M1 17h20" stroke="#ccc" stroke-width="2"/>`,
};

const ic = (n: string) => html`<svg class="ic" viewBox="0 0 20 20">${I[n]}</svg>`;
/** "|" is a separator, "v" a drop-down arrow, anything else an icon. */
const tools = (list: string) =>
  list.split(" ").map((n) =>
    n === "|" ? html`<i class="sep"></i>` : n === "v" ? html`<span class="slot drop"><i class="tri"></i></span>` : html`<span class="slot">${ic(n)}</span>`);
const chev = html`<svg class="chev" width="10" height="6" viewBox="0 0 10 6"><path d="M.5.500L5 5 9.500.500" fill="none" stroke="#555"/></svg>`;
const arrow = html`<svg class="sub" width="6" height="10" viewBox="0 0 6 10"><path d="M.7.700L5 5 .7 9.300" fill="none" stroke="#222" stroke-width="1.500"/></svg>`;

type Item = [label: string, glyph?: string] | null;
const DRAW: Item[] = [
  ["建模(M)", ">"], null,
  ["直线(L)", "gLine"], ["射线(R)", "gRay"], ["构造线(T)", "gX"], ["多线(U)", "gMl"], null,
  ["多段线(P)", "gPl"], ["三维多段线(3)", "g3p"], ["多边形(Y)", "gPoly"], ["矩形(G)", "gRect"], ["螺旋(I)", "gHelix"], null,
  ["圆弧(A)", ">"], ["圆(C)", ">"], ["圆环(D)", "gDonut"], ["样条曲线(S)", ">"], ["椭圆(E)", ">"], ["块(K)", ">"], null,
  ["表格...", "gTab"], ["点(O)", ">"], ["图案填充(H)...", "gHatch"], null,
  ["渐变色...", "gGrad"], ["边界(B)...", "gBound"], ["面域(N)", "gRegion"], ["区域覆盖(W)", "gWipe"], ["修订云线(V)", "gCloud"], null,
  ["文字(X)", ">"],
];
const BLOCK: Item[] = [["创建(M)...", "gMake"], null, ["基点(B)", "gBase"], ["定义属性(D)...", "gAttr"]];
const menu = (items: Item[], active = "") =>
  items.map((it) => it === null ? html`<hr>` :
    html`<div class="item ${it[1] === ">" ? "parent" : ""} ${it[0] === active ? "on" : ""}"><span class="gl">${it[1] !== ">" ? ic(it[1]!) : ""}</span><span class="lb">${it[0]}</span>${it[1] === ">" ? arrow : ""}</div>`);

@customElement("app-root")
export class AppRoot extends LitElement {
  static styles = css`
    :host { display: flex; flex-direction: column; width: 1519px; height: 969px; overflow: hidden; position: relative; background: #383838; color: #fff;
      font: 15px/20px "Open Sans", "Noto Sans CJK SC", sans-serif; }
    * { box-sizing: border-box; }
    svg { display: block; flex: none; }
    .ic { width: 20px; height: 20px; overflow: visible; }
    svg text { font-family: "Liberation Sans", sans-serif; }
    .l { fill: none; stroke: #cfcfcf; stroke-width: 1.3; }
    .b { fill: none; stroke: #5b9bff; stroke-width: 1.4; }
    .bf { fill: #5b9bff; }
    .k { fill: none; stroke: #5a5d63; stroke-width: 1.1; }
    .tri { width: 0; height: 0; border: 3.500px solid transparent; border-top: 4px solid #fff; border-bottom: 0; }

    .title { display: flex; height: 27px; background: #fff; flex: none; }
    .qat { width: 303px; padding-left: 41px; display: flex; background: linear-gradient(#a9a9a9, #868686); }
    .qat span, .info span { display: grid; place-items: center; height: 24px; }
    .cap { width: 460px; padding: 0 0 0 74px; color: #111; display: flex; gap: 23px; line-height: 18px; white-space: nowrap; }
    .cap b { font-weight: 400; font-family: "Noto Sans", sans-serif; letter-spacing: .45px; }
    .cap b + b { letter-spacing: .3px; }
    .info { width: 558px; display: flex; background: linear-gradient(#a9a9a9, #868686); }
    .search { width: 225px; height: 26px; background: #747474; border: 1px solid #333; border-top: 0; font-style: italic; color: #d0d0d0; padding-left: 2px; line-height: 22px; font-size: 14px; }
    .rtri { width: 0; height: 0; border: 5px solid transparent; border-left: 5px solid #fff; border-right: 0; }
    .win { flex: 1; }

    .menubar { height: 26px; flex: none; background: linear-gradient(#a2a2a2, #555); border-top: 1px solid #333; display: flex; padding-left: 38px; }
    .menus { display: grid; grid-template-columns: 75px 75px 77px 71px 79px 76px 78px 79px 82px 76px 82px 80px; line-height: 25px; flex: 1; letter-spacing: .1px; }
    .menus span { padding-left: 13px; white-space: nowrap; }
    .menus .act { background: linear-gradient(#5b5b5b, #464646); border: 1px solid #222; padding-left: 11px; line-height: 22px; height: 24px; margin-top: 1px; }
    .logo { position: absolute; left: 0; top: 0; }

    .ftabs { height: 31px; flex: none; background: #383838; border-bottom: 1px solid #505050; display: flex; padding-top: 3px; }
    .ftab { height: 27px; line-height: 30px; }
    .t1 { width: 169px; padding-left: 24px; background: linear-gradient(#5e5e5e, #4e4e4e); color: #b5b5b5; clip-path: path("M0 27C14 25 11 1 24 1H153C166 1 164 24 169 27Z"); }
    .t2 { width: 171px; margin-left: -9px; padding-left: 19px; background: linear-gradient(#858585, #5c5c5c); clip-path: path("M0 27C12 24 8 1 22 0H151C165 0 160 24 171 27Z"); display: flex; }
    .t2 b { font-weight: 400; width: 115px; }
    .t2 svg { margin: 11px 0 0 0; }
    .plus { display: block; margin: 4px 0 0 -1px; }

    .bars { height: 72px; flex: none; background: #5c5c5c; padding-top: 5px; display: flex; flex-direction: column; gap: 3px; }
    .row { display: flex; gap: 2px; height: 30px; width: 1519px; overflow: hidden; flex: none; }
    .bar { display: flex; align-items: center; border: 1px solid #333; background: #5f5f5f; flex: none; height: 30px; }
    .bar.first { border-left: 0; }
    .first > .slot:first-child { margin-left: -5px; }
    .slot { width: 29px; height: 28px; display: grid; place-items: center; flex: none; }
    .drop { width: 16px; }
    .drop .tri { border-top-color: #2d323b; }
    .row .sep { width: 6px; height: 24px; flex: none; background: linear-gradient(90deg, transparent 2px, #111 2px 3px, #eee 3px 4px, transparent 4px); }
    .grip { flex: none; width: 9px; height: 28px; background: #4d4d4d; }
    .grip::before { content: ""; display: block; width: 4px; height: 14px; margin: 5px 0 0 2px; background: repeating-linear-gradient(#111 0 1px, #777 1px 2px); }
    .combo { height: 28px; background: #fdfdfd; border: 1px solid #c8c8c8; display: flex; align-items: center; color: #000; padding: 0 5px 0 2px; flex: none; }
    .combo .chev { margin-left: auto; }
    .combo .ic { width: 18px; height: 20px; margin-right: 3px; }
    .w150 { width: 150px; }
    .layer { width: 375px; padding-left: 4px; }
    .view { width: 65px; }
    .color { width: 189px; padding-left: 7px; }
    .sq { width: 13px; height: 13px; border: 1px solid #000; background: #fff; margin: 0 4px 0 1px; }
    .mono { font: 15px "Liberation Serif", serif; letter-spacing: .7px; }
    .hid { width: 208px; flex: none; }
    .hid2 { width: 207px; flex: none; }

    .main { display: flex; height: 755px; flex: none; background: #5c5c5c; }
    .side { display: flex; flex: none; gap: 3px; align-items: flex-start; }
    .left { width: 54px; }
    .left .col:first-child { margin-left: -15px; }
    .right { width: 64px; padding-left: 4px; gap: 3px; overflow: hidden; }
    .stack { display: flex; flex-direction: column; gap: 2px; }
    .col { width: 31px; border: 1px solid #333; background: #5f5f5f; display: flex; flex-direction: column; align-items: flex-start; flex: none; }
    .col .slot { height: 28px; width: 28px; padding-top: 1px; }
    .right .col .slot { padding-right: 1px; padding-left: 1px; }
    .col .sep { height: 6px; width: 25px; margin-left: 2px; background: linear-gradient(transparent 2px, #333 2px 3px, #fff 3px 5px, transparent 5px); }
    .vg { height: 9px; width: 29px; background: #4d4d4d; }
    .vg::before { content: ""; display: block; width: 14px; height: 4px; margin: 2px 0 0 3px; background: repeating-linear-gradient(90deg, #111 0 1px, #777 1px 2px); }

    .canvas { width: 1401px; height: 755px; flex: none; }
    svg .cjk { font-family: "Noto Sans CJK SC", sans-serif; }

    .cmd { position: absolute; left: 420px; top: 877px; width: 670px; height: 34px; display: flex; border-radius: 4px; overflow: hidden; border: 1px solid #777; }
    .cmdl { width: 67px; background: linear-gradient(#666, #333); display: flex; align-items: center; }
    .cmdi { flex: 1; background: rgba(226, 226, 228, .82); display: flex; align-items: center; color: #77777a; font-style: italic; font-size: 16px; padding-left: 6px; }
    .cmdi .up { margin: 3px 6px 0 auto; }

    .foot { flex: 1; display: flex; flex-direction: column; border-top: 1px solid #5a5a5a; background: #383838; }
    .ltabs { height: 25px; display: flex; flex: none; line-height: 20px; color: #b9b9b9; }
    .lt { height: 23px; background: linear-gradient(#484848, #666); text-align: center; clip-path: path("M0 0H70C64 2 66 22 57 23H13C4 22 6 2 0 0Z"); width: 70px; margin-left: -1px; }
    .lt.cur { width: 59px; margin: 0; color: #fff; font-weight: 700; background: linear-gradient(#555, #989898); clip-path: path("M0 0H59C53 2 57 22 48 23H12C3 22 6 4 0 0Z"); }
    .status { height: 32px; margin-left: 806px; display: flex; background: #4f4f4f; }
    .cell { border: 1px solid #777; height: 32px; display: flex; align-items: center; justify-content: center; flex: none; border-right: 0; }
    .cell span { display: grid; place-items: center; height: 30px; }
    .cell .tri { border-width: 5px 4.500px 0; }
    .glow { background: #49525e; }
    .s14 { font-size: 14px; letter-spacing: -.5px; }
    .cell.s14 { font-size: 15px; letter-spacing: 0; }
    .w24 { width: 24px; } .w30 { width: 30px; } .w32 { width: 32px; } .w20 { width: 20px; } .w18 { width: 18px; } .w17 { width: 17px; } .w12 { width: 12px; }
    .w33 { width: 33px; } .w37 { width: 37px; } .w34 { width: 34px; } .w80 { width: 80px; } .w129 { width: 129px; } .w132 { width: 133px; } .w51 { width: 51px; }

    .pop { position: absolute; background: #f9f9f9; border: 1px solid #ddd; border-radius: 5px; color: #000; box-shadow: 0 6px 14px rgba(0, 0, 0, .3); display: flex; flex-direction: column; padding: 2px 6px; letter-spacing: .1px; }
    .draw { left: 491px; top: 53px; width: 211px; height: 756px; }
    .blk { left: 697px; top: 496px; width: 191px; height: 101px; padding-top: 2px; }
    .item { height: 28px; display: flex; align-items: center; flex: none; border-radius: 4px; white-space: nowrap; }
    .item.parent { height: 26px; }
    .item.on { background: #efefef; }
    .gl { width: 40px; padding-left: 4px; }
    .blk .gl { width: 39px; padding-left: 3px; }
    .sub { margin: 0 13px 0 auto; }
    .draw .item { width: 197px; }
    .pop hr { border: 0; height: 11px; margin: 0 4px; flex: none; background: linear-gradient(transparent 5px, #d5d5d5 5px 6px, transparent 6px); }
    .blk hr { margin: 0 4px 0 3px; }
    .mark { position: absolute; left: 690px; top: 480px; }
  `;

  render() {
    return html`
      <header class="title">
        <div class="qat">${["new", "open", "save", "saveas", "print", "undo"].map((n) => html`<span class="w30">${ic(n)}</span>`)}
          <span class="w17"><i class="tri"></i></span><span class="w30">${ic("redoOff")}</span><span class="w12"><i class="tri"></i></span>
          <span class="w20"><svg width="12" height="10"><path d="M1 1.500h10" stroke="#fff" stroke-width="1.500"/><path d="M1 4h10L6 9z" fill="#fff"/></svg></span></div>
        <div class="cap"><b>Autodesk AutoCAD 2018</b><b>Drawing1.dwg</b></div>
        <div class="info"><span class="w18"><i class="rtri"></i></span><div class="search">键入关键字或短语</div>
          <svg width="315" height="27">
            <g transform="translate(3 2)">${I.bino}</g><g transform="translate(33 2)">${I.user}</g>
            <text x="60" y="18" class="cjk" font-size="15" fill="#fff">登录</text>
            <path d="M166 10h6l-3 4zM242 10h6l-3 4zM303 10h6l-3 4z" fill="#fff"/>
            <g transform="translate(185 2)">${I.cart}</g><g transform="translate(216 1) scale(.95)">${I.a360}</g>
            <path d="M261.500 3v22" stroke="#aaa"/><g transform="translate(273 2)">${I.qhelp}</g>
          </svg></div>
        <svg class="win" width="198" height="27"><path d="M53 7.500h12" stroke="#888"/><rect x="111.500" y="2.500" width="11" height="11" fill="none" stroke="#888"/><path d="M170 2l12 12M182 2l-12 12" stroke="#888"/></svg>
      </header>
      <nav class="menubar">
        <div class="menus">${["文件(F)", "编辑(E)", "视图(V)", "插入(I)", "格式(O)", "工具(T)", "绘图(D)", "标注(N)", "修改(M)", "参数(P)", "窗口(W)", "帮助(H)"].map((m) => html`<span class=${m === "绘图(D)" ? "act" : ""}>${m}</span>`)}</div>
        <svg width="53" height="25"><path d="M2 15.500h12" stroke="#2a2a2a" stroke-width="2.500"/><path d="M26 10V6.500h10V14h-4M22 10.500h9.500v8H22z" fill="none" stroke="#2a2a2a" stroke-width="1.800"/><path d="M44 8l8 9M52 8l-8 9" stroke="#2a2a2a" stroke-width="2.500"/></svg>
      </nav>
      <svg class="logo" width="36" height="49"><rect x="-1" y="-1" width="36.500" height="48.500" fill="url(#lg)" stroke="#222"/><path d="M-1 21.500H14" stroke="#b31f26" stroke-width="5"/><path d="M10 2L-4 29" stroke="#d22a31" stroke-width="5"/><path d="M6 1h7l7 31-6 1.500z" fill="#c4242b"/><path d="M11 1h2.500l7 31-2.500.5z" fill="#ea5a60"/><path d="M23.500 19h9L28 24z" fill="#333a45"/></svg>
      <div class="ftabs"><div class="ftab t1">开始</div><div class="ftab t2"><b>Drawing1*</b><svg width="12" height="12"><path d="M2 1l8 8M10 1L2 9" stroke="#4a4a4a" stroke-width="2.500"/></svg></div>
        <svg class="plus" width="30" height="22"><path d="M1 2H14Q25 3 26 21H15Q2 20 1 2Z" fill="#4d4d4d" stroke="#6b6b6b"/><path d="M13.500 7v10M8.500 12h10" stroke="#c8c8c8" stroke-width="2.500"/></svg></div>
      <section class="bars">
        <div class="row">
          <div class="bar first">${tools("new open save | print preview publish dwf | cut copy paste match block | undo2 v redo2 v | hand")}<span class="hid"></span>${tools("tools calc | help")}</div>
          <div class="bar"><i class="grip"></i>${tools("abrush")}<div class="combo w150">${chev}</div>${tools("| dimbrush")}<div class="combo w150">${chev}</div>${tools("| tablebrush")}<div class="combo w150">${chev}</div>${tools("| leaderbrush")}<div class="combo w150"></div></div>
        </div>
        <div class="row">
          <div class="bar first">${tools("wire2 | sph1 sph2 sph3 sph4 | sphPanel")}</div>
          <div class="bar"><i class="grip"></i>${tools("viewPanel | c0 c1 c2 c3 c4 c5 | d0 d1 d2")}<span class="hid2"></span><div class="combo view">${chev}</div></div>
          <div class="bar"><i class="grip"></i>${tools("layers")}<div class="combo layer">${ic("bulb")}${ic("sun")}${ic("vpfrz")}${ic("lock")}<i class="sq"></i>轮廓线${chev}</div>${tools("lay1 lay2 lay3")}</div>
          <div class="bar"><i class="grip"></i><div class="combo color"><i class="sq"></i><span class="mono">ByLayer</span>${chev}</div>${tools("|")}<div class="combo"><svg width="60" height="10"><path d="M3 4.500h57" stroke="#000"/></svg></div></div>
        </div>
      </section>
      <section class="main">
        <div class="side left">
          <div class="col"><i class="vg"></i>${tools("tline tray tpline tpoly trect tarc tcirc tcloud tspl tell tell2 tins tblk tpt that tgra treg ttab ttxt tadd")}</div>
          <div class="col"><i class="vg"></i>${tools("m1 m2 m3 m4 | m5 m6 m7 m8 | m9 m10 m11 m12 m13 | m14 m15 m16 m17 | m18 m19 m20 | m21")}</div>
        </div>
        ${this.canvas()}
        <div class="side right">
          <div class="stack"><div class="col"><i class="vg"></i>${tools("e1 e2 e3 e4 e5 e6 e7 e8 e9 e10 e11 e12 e13 e14 e15 e16 e17 e18")}</div>
            <div class="col"><i class="vg"></i>${tools("o1 o2 o3 o4 | o5 o6")}</div></div>
          <div class="col"><i class="vg"></i>${tools("s1 s2 | s3 s4 s5 s6 s7 | s8 s9 s10 | s11 s12 s13 s14 | s15 s16 | s17")}</div>
        </div>
      </section>
      <footer class="foot">
        <div class="ltabs"><div class="lt cur">模型</div><div class="lt">布局1</div><div class="lt">布局2</div>
          <svg width="34" height="24"><path d="M5 21.500Q7 2 19 2H33Q31 20 20 21.500Z" fill="#4a4a4a" stroke="#5d5d5d"/><path d="M19 6v10M14 11h10" stroke="#c5c5c5" stroke-width="2"/></svg></div>
        <div class="status">
          <div class="cell w37 s14">模型</div><div class="cell w33 glow">${ic("bGrid")}</div><div class="cell w32 glow">${ic("bSnap")}</div>
          <div class="cell w129"><span class="w30">${ic("bOrtho")}</span><span class="w30">${ic("bPolar")}</span><span class="w18"><i class="tri"></i></span><span class="w32">${ic("bIso")}</span><span class="w17"><i class="tri"></i></span></div>
          <div class="cell w80"><span class="w30">${ic("bTrack")}</span><span class="w30">${ic("bOsnap")}</span><span class="w18"><i class="tri"></i></span></div>
          <div class="cell w32 glow">${ic("bLw")}</div>
          <div class="cell w132"><span class="w30">${ic("bAn1")}</span><span class="w30">${ic("bAn2")}</span><span class="w30">${ic("bAn3")}</span><span class="w24 s14">1:1</span><span class="w12"><i class="tri"></i></span></div>
          <div class="cell w51"><span class="w30">${ic("bGear")}</span><span class="w18"><i class="tri"></i></span></div>
          <div class="cell w32">${ic("bPlus")}</div><div class="cell w33">${ic("bUnits")}</div><div class="cell w34 glow">${ic("bPerf")}</div><div class="cell w32">${ic("bDoc")}</div>
          <div class="cell w33">${ic("bFull")}</div><div class="cell w30">${ic("bMenu")}</div>
        </div>
      </footer>
      <div class="cmd"><div class="cmdl"><svg width="67" height="32"><path d="M6 5v23M10 5v23" stroke="#aaa" stroke-width="2" stroke-dasharray="2 2"/><path d="M20 11l9 10M29 11l-9 10" stroke="#ddd" stroke-width="2"/><path d="M49 13l10 10" stroke="#c8ccd2" stroke-width="3.500" stroke-linecap="round"/><path d="M45 10a4 4 0 0 0 7 3M51 13a4 4 0 0 0-4-6" fill="none" stroke="#c8ccd2" stroke-width="2.500"/></svg></div>
        <div class="cmdi"><svg width="40" height="20"><rect x=".5" y="1.500" width="18" height="17" rx="2" fill="#9aa2ae" stroke="#858c97"/><path d="M4 6l5 4-5 4M10 14.500h5" fill="none" stroke="#e9edf2" stroke-width="1.800"/><path d="M22 8h8l-4 5z" fill="#555"/></svg>键入命令<svg class="up" width="10" height="6"><path d="M0 6h10L5 0z" fill="#222"/></svg></div></div>
      <div class="pop draw">${menu(DRAW, "块(K)")}</div>
      <div class="pop blk">${menu(BLOCK)}</div>
      <svg class="mark" width="200" height="64"><ellipse cx="99" cy="32" rx="90.500" ry="23.500" fill="none" stroke="#ff2410" stroke-width="2.800"/></svg>
    `;
  }

  private canvas() {
    return html`<svg class="canvas" viewBox="54 156 1401 755">
      <defs>
        <linearGradient id="w" x2="0" y2="1"><stop stop-color="#fff"/><stop offset="1" stop-color="#bfc5d0"/></linearGradient>
        <linearGradient id="mg" x2="0" y2="1"><stop stop-color="#cfd1d6"/><stop offset="1" stop-color="#fafafa"/></linearGradient>
        <linearGradient id="dg" x2="0" y2="1"><stop stop-color="#555"/><stop offset="1" stop-color="#eee"/></linearGradient>
        <linearGradient id="lg" x2="0" y2="1"><stop stop-color="#8b8b8b"/><stop offset="1" stop-color="#b5b5b5"/></linearGradient>
        <radialGradient id="blueball" cx=".4" cy=".3"><stop stop-color="#63aef0"/><stop offset="1" stop-color="#1262b4"/></radialGradient>
        <radialGradient id="goldball" cx=".35" cy=".3" r=".75"><stop stop-color="#ffd91a"/><stop offset=".45" stop-color="#e8862a"/><stop offset=".75" stop-color="#4637a8"/><stop offset="1" stop-color="#1a1a60"/></radialGradient>
      </defs>
      <rect x="54" y="156" width="1401" height="755" fill="#212830"/>
      <path d="M228.500 156v755M455.500 156v755M681.500 156v755M907.500 156v755M1133.500 156v755M1359.500 156v755M54 357.500h1401M54 809.500h1401" stroke="#262e38"/>
      <path d="M54 583.500h1401" stroke="#2f3846"/>
      <text x="57" y="177" class="cjk" font-size="14.500" fill="#e6e6e6" textLength="133">[−][俯视][二维线框]</text>
      <path d="M74.500 828v62.500H137M69.500 884.500h11v11h-11zM76 810l7.500 8L90.500 810M83.500 818v7M141 874l15 15M156 874l-15 15" fill="none" stroke="#f0f0f0" stroke-width="1.100"/>
      <path d="M700 454.500h40M747 462v36" stroke="#2d4f9c" stroke-width="7"/><path d="M700 454.500h40M747 462v36" stroke="#c6d6f6" stroke-width="3"/>
      <rect x="739" y="445" width="17" height="17" fill="#007fff" stroke="#335"/>
      <g stroke="#0f0" fill="none"><path d="M788.500 752V911M760 887.500h126" stroke="#00d400"/><path d="M777 820h24l-11.500 66z" fill="#0f0" stroke="none"/>
        <path d="M976.500 790.500h113M977 790.500l56.500 97L1139 705"/>
        <path d="M1304.500 781v130M1373 809.500h44"/><path d="M1304 809.500l69-12v25zM1417 797.500v25l70-12.500z" fill="#0f0" stroke="none"/></g>
      <path d="M1395 684v227" stroke="#9a1518" stroke-width="1.800"/>
      <text x="972.500" y="769" font-size="81.500" fill="#0f0">6.3</text><text x="1338" y="795" font-size="82.500" fill="#0f0" textLength="111" lengthAdjust="spacingAndGlyphs">M8</text>
      <path d="M898 911V888h271.500Q1170 901 1175.500 911" fill="none" stroke="#fff" stroke-width="3.500"/>
      <circle cx="1366" cy="243.500" r="57.500" fill="none" stroke="#454c54" stroke-width="14"/>
      <rect x="1338" y="216" width="56" height="56" fill="#b1b2b4"/><rect x="1349" y="227" width="34" height="34" fill="#a2a9af"/>
      <g fill="#b4b7ba" font-size="20" text-anchor="middle">
        ${[["北", 1366, 192], ["西", 1305.5, 252], ["东", 1426, 252], ["南", 1366, 313]].map(([t, x, y]) => svg`<text class="cjk" x=${x} y=${y}>${t}</text>`)}
        <text class="cjk" x="1366" y="255" font-size="32" font-weight="300" fill="#59616a">上</text></g>
      <rect x="1337.500" y="338" width="55.500" height="19.500" rx="5" fill="#9a9eaa" stroke="#7d818c" stroke-width="1.500"/><text x="1341.500" y="352" font-size="13" fill="#5a5f69" textLength="30">WCS</text><path d="M1378 344h10l-5 5z" fill="none" stroke="#c5c8d0"/>
      <rect x="1411" y="389" width="40" height="259" rx="4" fill="#565d62" stroke="#666c72"/>
      <g fill="none" stroke="#40474d" stroke-width="1.600"><circle cx="1444" cy="395" r="4"/><path d="M1442 393l4 4m0-4l-4 4"/>
        <path d="M1431 411h10q3 0 3 3v10a13 13 0 1 1-13-13z"/><circle cx="1431" cy="424" r="10"/><circle cx="1431" cy="424" r="5.500"/><path d="M1422 433l5-5m8 0l5 5"/>
        <path d="M1425 489l-9-16 3-1 6 6-3-13 3-1 4 10v-12h3l1 12 4-10 3 1-3 12 4-5 2 2-7 15z"/>
        <path d="M1416 498l18 18M1434 498l-18 18M1416 503v-5h5M1430 498h5v5M1416 511v6h5"/><circle cx="1436" cy="515" r="6"/><path d="M1440 520l6 6" stroke-width="3"/>
        <path d="M1430.500 544l-5 6h3v18h-3l5 6 5-6h-3v-18h3z"/><ellipse cx="1430" cy="560" rx="14" ry="6"/>
        <path d="M1416 596h7v8h-7zM1427 596h7v8h-7zM1437 596h7v8h-7zM1416 608h20v17h-20z"/><circle cx="1444" cy="641" r="4"/><path d="M1442 641h4"/><path d="M1415 457.500h32M1415 591.500h32" stroke-width="1" stroke="#656c70"/></g>
      <path d="M1428 448h7l-3.500 4zM1428 535h7l-3.500 4zM1428 582h7l-3.500 4zM1422 611l9 5.500-9 5.500z" fill="#40474d"/>
    </svg>`;
  }
}
